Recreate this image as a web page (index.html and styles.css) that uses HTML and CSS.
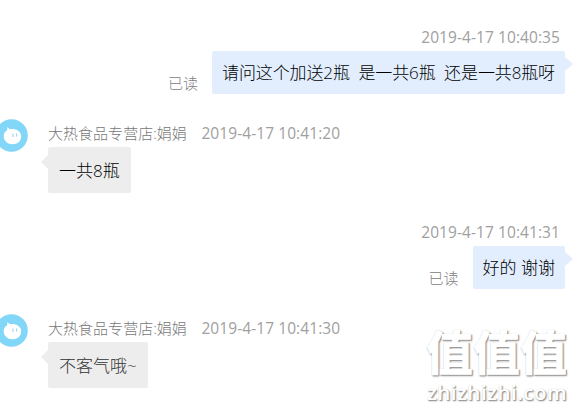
FILE: index.html
```html
<!DOCTYPE html>
<html lang="zh-CN">
<head>
<meta charset="utf-8">
<title>聊天记录</title>
<link rel="stylesheet" href="styles.css">
</head>
<body>
<main class="chat">
  <section class="message outgoing">
    <time class="meta">2019-4-17 10:40:35</time>
    <div class="row"><span class="read">已读</span><p class="bubble long">请问这个加送2瓶&nbsp; 是一共6瓶&nbsp; 还是一共8瓶呀</p></div>
  </section>
  <section class="message incoming">
    <svg class="avatar" viewBox="0 0 33 33"><circle cx="16.5" cy="16.5" r="16.3" fill="#82d6f7"/><path d="M12 8.200c1 .2 2 .9 2.600 2 6-.9 11.600 1.800 11.600 7 0 5-3.700 8-8.600 8S8.700 21.800 8.700 17.200c0-2.600 1.200-4.300 3.200-5.600.6-1 .6-2 .1-3.400z" fill="#fff"/><path d="M18 14.500v3.500M21.600 14.500v3" stroke="#a5d8ec" stroke-width="1.200"/></svg>
    <div class="body">
      <div class="meta"><span class="name">大热食品专营店:娟娟</span><time>2019-4-17 10:41:20</time></div>
      <p class="bubble">一共8瓶</p>
    </div>
  </section>
  <section class="message outgoing">
    <time class="meta">2019-4-17 10:41:31</time>
    <div class="row"><span class="read">已读</span><p class="bubble">好的 谢谢</p></div>
  </section>
  <section class="message incoming last">
    <svg class="avatar" viewBox="0 0 33 33"><circle cx="16.5" cy="16.5" r="16.3" fill="#82d6f7"/><path d="M12 8.200c1 .2 2 .9 2.600 2 6-.9 11.600 1.800 11.600 7 0 5-3.700 8-8.600 8S8.700 21.800 8.700 17.200c0-2.600 1.200-4.300 3.200-5.600.6-1 .6-2 .1-3.400z" fill="#fff"/><path d="M18 14.500v3.500M21.600 14.500v3" stroke="#a5d8ec" stroke-width="1.200"/></svg>
    <div class="body">
      <div class="meta"><span class="name">大热食品专营店:娟娟</span><time>2019-4-17 10:41:30</time></div>
      <p class="bubble">不客气哦~</p>
    </div>
  </section>
  <div class="watermark"><div class="mark">值值值</div><div class="domain">zhizhizhi.com</div></div>
</main>
</body>
</html>
```
FILE: styles.css
```css
* { box-sizing: border-box; }
body { margin: 0; background: #fff; }
p { margin: 0; }
.chat {
  position: relative;
  width: 577px;
  height: 410px;
  padding-top: 26px;
  overflow: hidden;
  font-family: "Open Sans", "Noto Sans CJK SC", sans-serif;
  font-weight: 300;
}
.message { display: flex; }
.outgoing { flex-direction: column; align-items: flex-end; height: 93px; padding-right: 12px; }
.incoming { height: 102px; }
.meta {
  height: 25px;
  line-height: 23px;
  font-size: 15.5px;
  font-weight: 400;
  color: #a0a0a0;
  white-space: nowrap;
  letter-spacing: .08px;
}
.outgoing .meta { padding-right: 5px; }
.row { display: flex; align-items: flex-end; }
.read { margin-right: 14px; font-size: 15px; line-height: 21px; color: #808080; }
.bubble {
  position: relative;
  height: 43px;
  padding: 0 10px;
  border-radius: 2px;
  background: #e2eefe;
  color: #000;
  font-size: 17px;
  line-height: 44px;
  white-space: nowrap;
}
.long { letter-spacing: -.12px; }
.outgoing .bubble::after {
  content: "";
  position: absolute;
  left: 100%;
  top: 6px;
  border: 7px solid transparent;
  border-left: 8px solid #e2eefe;
  border-right: 0;
}
.avatar { width: 33px; height: 33px; margin-left: -5px; flex: none; }
.body { display: flex; flex-direction: column; align-items: flex-start; margin-left: 20px; padding-top: 3px; }
.name { margin-right: 14.500px; font-size: 15px; font-weight: 300; letter-spacing: .03px; color: #777; }
.incoming .bubble { height: 46px; padding: 0 11px; line-height: 47px; background: #ededed; }
.incoming .bubble::before {
  content: "";
  position: absolute;
  right: 100%;
  top: 8px;
  border: 7px solid transparent;
  border-right: 7px solid #ededed;
  border-left: 0;
}
.last .bubble { color: #333; }
.watermark {
  position: absolute;
  left: 426px;
  top: 326px;
  width: 146px;
  color: #fff;
  font-weight: 900;
  white-space: nowrap;
  text-shadow: 1px 1px 1px #999, 1px 1px 2px #aaa, 0 0 1px #ddd;
}
.mark { height: 55px; font-size: 47px; line-height: 53px; }
.domain { padding-left: 1px; font-size: 20.5px; line-height: 22px; font-weight: 600; letter-spacing: .5px; }
```
